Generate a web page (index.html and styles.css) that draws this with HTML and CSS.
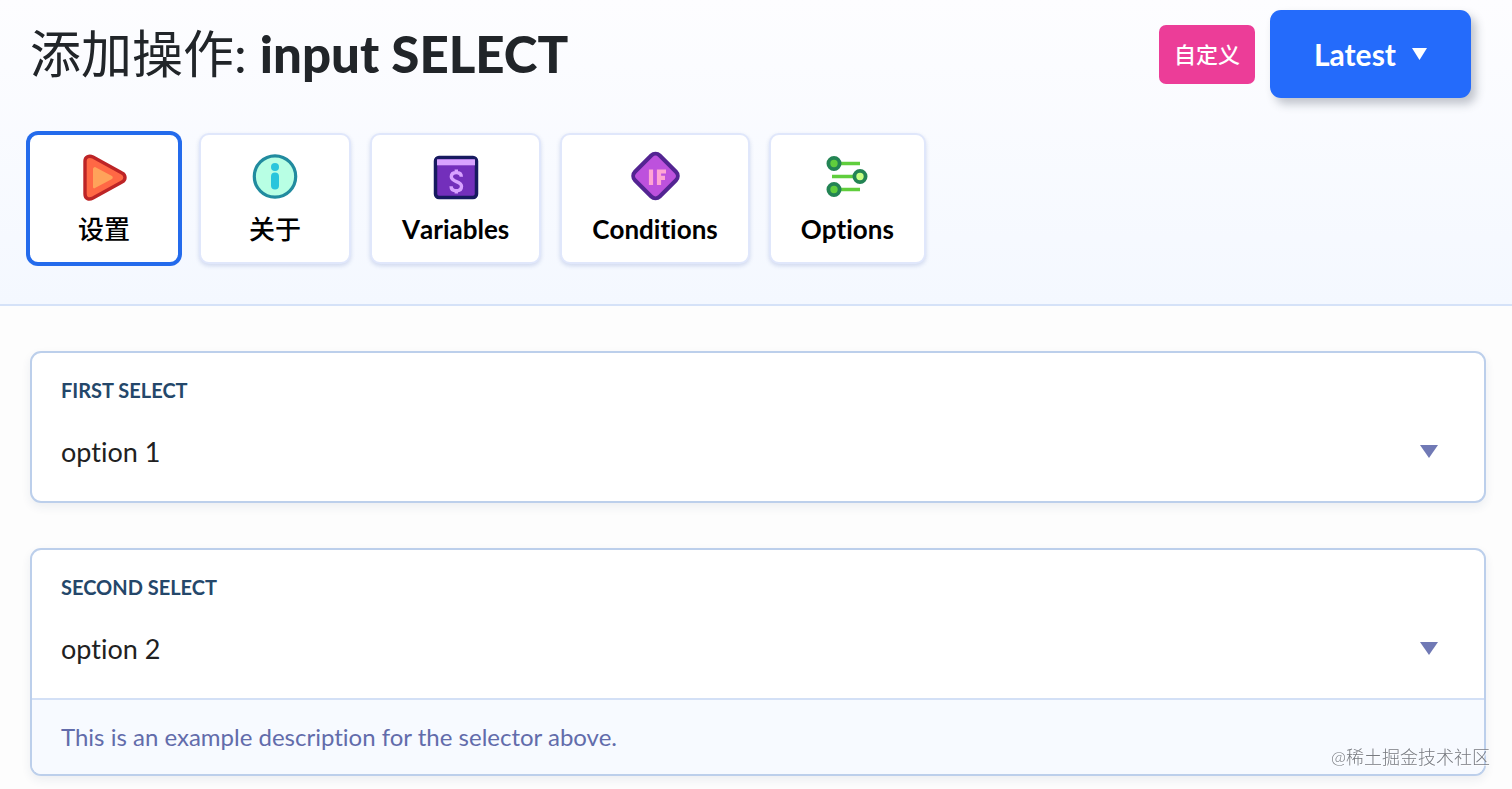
FILE: index.html
```html
<!DOCTYPE html>
<html lang="zh-CN">
<head>
    <meta charset="UTF-8">
    <meta name="viewport" content="width=device-width, initial-scale=1">
    <title>添加操作: input SELECT</title>
    <link rel="stylesheet" href="styles.css">
</head>
<body>
    <header class="header">
        <div class="header-top">
            <h1 class="title">添加操作: <strong>input SELECT</strong></h1>
            <div class="actions">
                <span class="badge">自定义</span>
                <button type="button" class="version-button">
                    Latest
                    <svg class="version-caret" viewBox="0 0 14 11" aria-hidden="true"><path d="M0 0h14L7 11z" fill="currentColor"/></svg>
                </button>
            </div>
        </div>

        <nav class="tabs">
            <button type="button" class="tab tab-cjk active">
                <svg class="tab-icon" viewBox="0 0 52 52" aria-hidden="true">
                    <path d="M7 10v33c0 5 4 6 8 4l29-16c4-2 4-7 0-9L15 6c-4-2-8 0-8 4z" fill="#ff6845" stroke="#bd2426" stroke-width="3.400"/>
                    <path d="M15 18v18c0 1 1 2 2 1l17-9c1-1 1-2 0-3l-17-9c-1 0-2 1-2 2z" fill="#ffa35a"/>
                </svg>
                设置
            </button>
            <button type="button" class="tab tab-cjk">
                <svg class="tab-icon" viewBox="0 0 52 52" aria-hidden="true">
                    <circle cx="26" cy="25.500" r="20.700" fill="#b8ffe4" stroke="#218b9f" stroke-width="3.200"/>
                    <circle cx="26" cy="16" r="4" fill="#29c5dc"/>
                    <rect x="22" y="21.500" width="8" height="17" rx="4" fill="#29c5dc"/>
                </svg>
                关于
            </button>
            <button type="button" class="tab">
                <svg class="tab-icon" viewBox="0 0 52 52" aria-hidden="true">
                    <rect x="5.500" y="6.500" width="41" height="40" rx="3.500" fill="#732fbb" stroke="#171a60" stroke-width="3.500"/>
                    <rect x="7" y="8.300" width="38" height="6" fill="#d8a2ff"/>
                    <path d="M31.300 25.800c0-2.800-1.800-4.300-5-4.300s-5 1.500-5 4.300c0 5.500 10.200 4 10.200 9.500 0 2.800-2 4.500-5.200 4.500s-5.200-1.700-5.200-4.500M26.300 18.500v3.500M26.300 39v3.500" fill="none" stroke="#d8a2ff" stroke-width="3.400"/>
                </svg>
                Variables
            </button>
            <button type="button" class="tab">
                <svg class="tab-icon" viewBox="0 0 52 52" aria-hidden="true">
                    <rect x="9" y="7.500" width="35" height="35" rx="6" transform="rotate(45 26.500 25)" fill="#bd51dd" stroke="#532492" stroke-width="4"/>
                    <path d="M22 18.500v15.500M30 34V18.500M28 20.500h9M28 26.800h8" fill="none" stroke="#ffa5d4" stroke-width="4.200"/>
                </svg>
                Conditions
            </button>
            <button type="button" class="tab">
                <svg class="tab-icon" viewBox="0 0 52 52" aria-hidden="true">
                    <path d="M18 12.500h21M11 25.500h24M18 38.500h21" fill="none" stroke="#60ce3d" stroke-width="3.600"/>
                    <g stroke="#238454" stroke-width="3.800">
                        <circle cx="13" cy="12.500" r="5.600" fill="#60ce3d"/>
                        <circle cx="39" cy="25.500" r="5.600" fill="#c6ff82"/>
                        <circle cx="13" cy="38.500" r="5.600" fill="#60ce3d"/>
                    </g>
                </svg>
                Options
            </button>
        </nav>
    </header>

    <main class="content">
        <div class="card">
            <div class="field">
                <label class="field-label" for="firstSelect">FIRST SELECT</label>
                <div class="select-wrap">
                    <select id="firstSelect">
                        <option selected>option 1</option>
                        <option>option 2</option>
                    </select>
                    <svg class="select-caret" viewBox="0 0 18 13" aria-hidden="true"><path d="M0 0h18L9 13z" fill="currentColor"/></svg>
                </div>
            </div>
        </div>

        <div class="card">
            <div class="field">
                <label class="field-label" for="secondSelect">SECOND SELECT</label>
                <div class="select-wrap">
                    <select id="secondSelect" aria-describedby="secondDescription">
                        <option>option 1</option>
                        <option selected>option 2</option>
                    </select>
                    <svg class="select-caret" viewBox="0 0 18 13" aria-hidden="true"><path d="M0 0h18L9 13z" fill="currentColor"/></svg>
                </div>
            </div>
            <p class="description" id="secondDescription">This is an example description for the selector above.</p>
        </div>
    </main>

    <div class="watermark">@稀土掘金技术社区</div>
</body>
</html>
```
FILE: styles.css
```css
* {
    box-sizing: border-box;
}
body {
    margin: 0;
    font-family: Lato, "Noto Sans CJK SC", sans-serif;
    font-variant-ligatures: none;
    background: #fdfdfd;
    color: #212529;
}
button,
select {
    font-family: inherit;
    font-variant-ligatures: none;
    cursor: pointer;
}

/* Header */
.header {
    padding: 10px 41px 40px 28px;
    background: linear-gradient(#fdfdff, #f4f8ff);
    border-bottom: 2px solid #d5e2f8;
}
.header-top {
    display: flex;
    align-items: center;
    justify-content: space-between;
    margin-bottom: 35px;
}
.title {
    margin: 0 0 0 2px;
    font-size: 51px;
    line-height: 88px;
    font-weight: 400;
}
.title strong {
    font-weight: 900;
}
.actions {
    display: flex;
    align-items: center;
    gap: 15px;
}
.badge {
    padding: 0 15px;
    border-radius: 7px;
    background: #ec3d98;
    color: white;
    font-size: 22px;
    line-height: 59px;
    font-weight: 500;
}
.version-button {
    display: flex;
    align-items: center;
    gap: 16px;
    padding: 0 44px;
    border: none;
    border-radius: 11px;
    background: #246bfb;
    color: white;
    font-size: 30px;
    line-height: 88px;
    font-weight: 700;
    box-shadow: 5px 6px 10px rgba(40, 50, 70, 0.28);
}
.version-caret {
    width: 15px;
    height: 12px;
}

/* Tabs */
.tabs {
    display: flex;
    flex-wrap: wrap;
    gap: 19px;
}
.tab {
    display: flex;
    flex-direction: column;
    align-items: center;
    gap: 8px;
    min-width: 152px;
    padding: 16px 30px 15px;
    border: 2px solid #e0e7fb;
    border-radius: 10px;
    background: white;
    color: black;
    font-size: 26px;
    line-height: 36px;
    font-weight: 700;
    font-kerning: none;
    box-shadow: 0 2px 4px rgba(60, 90, 170, 0.2);
}
.tab-cjk {
    font-weight: 500;
}
.tab.active {
    border-color: #246bec;
    box-shadow: 0 0 0 2px #246bec;
}
.tab-icon {
    width: 52px;
    height: 52px;
}

/* Fields */
.content {
    display: flex;
    flex-direction: column;
    gap: 45px;
    padding: 45px 26px 13px 30px;
}
.card {
    border: 2px solid #bccfeb;
    border-radius: 11px;
    background: white;
    box-shadow: 0 4px 10px rgba(40, 60, 100, 0.08);
    overflow: hidden;
}
.field {
    padding: 25px 29px 20px;
}
.field-label {
    display: block;
    margin-bottom: 19px;
    color: #24476a;
    font-size: 20px;
    line-height: 24px;
    font-weight: 700;
}
.select-wrap {
    display: grid;
    align-items: center;
}
.select-wrap select,
.select-caret {
    grid-area: 1 / 1;
}
.select-wrap select {
    appearance: none;
    width: 100%;
    height: 60px;
    padding: 0;
    border: none;
    background: transparent;
    color: #212121;
    font-size: 27px;
}
.select-caret {
    justify-self: end;
    width: 18px;
    height: 13px;
    margin-right: 17px;
    color: #7079b5;
    pointer-events: none;
}
.description {
    margin: 0;
    padding: 19px 29px;
    border-top: 2px solid #d3e0f6;
    background: #f7faff;
    color: #626cab;
    font-size: 24px;
    line-height: 36px;
}

.watermark {
    position: fixed;
    right: 22px;
    bottom: 19px;
    color: #777a80;
    font-size: 18px;
    line-height: 26px;
    font-weight: 300;
    text-shadow: 1px 1px 1px white;
}
```
